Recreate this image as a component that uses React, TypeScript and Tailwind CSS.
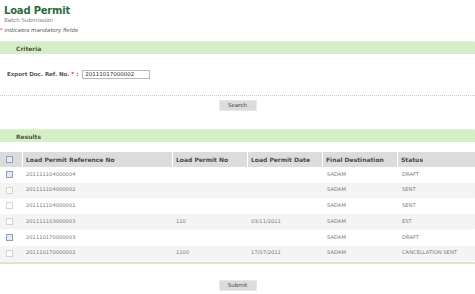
import React from 'react';

type Row = { ref: string; no: string; date: string; dest: string; status: string; marked?: boolean };

const ROWS: Row[] = [
  { ref: '201111104000004', no: '', date: '', dest: 'SADAM', status: 'DRAFT', marked: true },
  { ref: '201111104000002', no: '', date: '', dest: 'SADAM', status: 'SENT' },
  { ref: '201111104000001', no: '', date: '', dest: 'SADAM', status: 'SENT' },
  { ref: '201111103000003', no: '110', date: '03/11/2011', dest: 'SADAM', status: 'EST' },
  { ref: '201110170000003', no: '', date: '', dest: 'SADAM', status: 'DRAFT', marked: true },
  { ref: '201110170000002', no: '1100', date: '17/07/2011', dest: 'SADAM', status: 'CANCELLATION SENT' },
];

const cols = 'grid grid-cols-[23px_150px_75px_75px_75px_1fr]';

const Box: React.FC<{ marked?: boolean }> = ({ marked }) => (
  <span
    className={
      'block w-[7px] h-[7px] border ' +
      (marked ? 'border-[#8ea2c0] bg-[#e4eaf4]' : 'border-[#d4d4d4] bg-white')
    }
  />
);

const Bar: React.FC<{ title: string }> = ({ title }) => (
  <div className="h-[13px] bg-[#d4efc8] border-t border-dotted border-[#eef8e8] flex items-center pl-[16px]">
    <span className="font-bold text-[6px] text-[#55553f]">{title}</span>
  </div>
);

const Button: React.FC<{ label: string }> = ({ label }) => (
  <div className="flex justify-center">
    <span className="w-[38px] h-[11px] bg-[#dcdcdc] border border-[#e8e8e8] flex items-center justify-center text-[5.5px] text-[#444]">
      {label}
    </span>
  </div>
);

const App: React.FC = () => {
  return (
    <div className="w-[475px] h-[294px] bg-white overflow-hidden font-['DejaVu_Sans',sans-serif] text-[#555]">
      <div className="h-[41px] pl-[4px] pt-[5px]">
        <h1 className="text-[10px] leading-[12px] tracking-[-0.2px] font-bold text-[#2c6b3c]">Load Permit</h1>
        <div className="text-[5.5px] leading-[7px] text-[#808080]">Batch Submission</div>
        <div className="-ml-[4px] mt-[3px] text-[5.5px] leading-[7px] italic text-[#555]">
          <span className="text-[#e0284a] not-italic">*</span> indicates mandatory fields
        </div>
      </div>

      <Bar title="Criteria" />

      <div className="mt-[15px] h-[10px] flex items-center pl-[7px]">
        <span className="text-[5.5px] font-bold text-[#555]">
          Export Doc. Ref. No. <span className="text-[#e0284a]">*</span> :
        </span>
        <span className="ml-[4px] w-[68px] h-[9px] border border-[#b8b8b8] bg-white flex items-center pl-[2px] text-[5.5px] text-[#333]">
          20111017000002
        </span>
      </div>

      <div className="mt-[16px] border-b border-dotted border-[#d4d0bc]" />

      <div className="mt-[4px]">
        <Button label="Search" />
      </div>

      <div className="mt-[18px]">
        <Bar title="Results" />
      </div>

      <div className="mt-[10px]">
        <div className={cols + ' h-[15px] bg-[#dcdcdc] text-[6px] font-bold text-[#4a4a4a]'}>
          <div className="flex items-center pl-[6px] border-r border-white">
            <Box marked />
          </div>
          <div className="flex items-center pl-[3px] border-r border-white">Load Permit Reference No</div>
          <div className="flex items-center pl-[3px] border-r border-white">Load Permit No</div>
          <div className="flex items-center pl-[3px] border-r border-white">Load Permit Date</div>
          <div className="flex items-center pl-[3px] border-r border-white">Final Destination</div>
          <div className="flex items-center pl-[3px]">Status</div>
        </div>
        {ROWS.map((r, i) => (
          <div
            key={r.ref + i}
            className={
              cols +
              ' h-[15.8px] text-[5.2px] text-[#7a7a7a] border-b border-dotted border-white ' +
              (i % 2 === 1 ? 'bg-[#f4f4f4]' : 'bg-white')
            }
          >
            <div className="flex items-center pl-[6px]">
              <Box marked={r.marked} />
            </div>
            <div className="flex items-center pl-[3px]">{r.ref}</div>
            <div className="flex items-center pl-[3px]">{r.no}</div>
            <div className="flex items-center pl-[3px]">{r.date}</div>
            <div className="flex items-center pl-[4px]">{r.dest}</div>
            <div className="flex items-center pl-[4px]">{r.status}</div>
          </div>
        ))}
      </div>

      <div className="border-b-2 border-[#e4e2cc]" />

      <div className="mt-[16px]">
        <Button label="Submit" />
      </div>
    </div>
  );
};

export default App;
